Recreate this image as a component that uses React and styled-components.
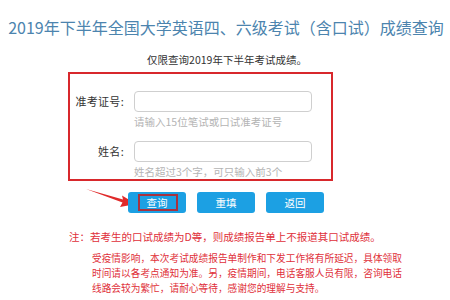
import React from 'react';
import styled, { createGlobalStyle } from 'styled-components';

const GlobalStyle = createGlobalStyle`
  html, body {
    margin: 0;
    padding: 0;
    background: #fff;
  }
  body {
    font-family: "Noto Sans CJK SC", "Noto Sans", sans-serif;
  }
`;

const Page = styled.div`
  width: 450px;
  height: 300px;
  overflow: hidden;
  padding-top: 17px;
  box-sizing: border-box;
`;

const Title = styled.h1`
  margin: 0;
  text-align: center;
  font-size: 16px;
  line-height: 20px;
  font-weight: 400;
  color: #4c84ae;
  white-space: nowrap;
  padding-left: 2px;
`;

const Subtitle = styled.p`
  margin: 16px 0 0;
  text-align: center;
  font-size: 10.5px;
  line-height: 14px;
  color: #333;
  padding-left: 4px;
`;

const FormBox = styled.div`
  margin: 5px 0 0 68px;
  width: 265px;
  height: 109px;
  box-sizing: border-box;
  border: 2px solid #d8282c;
  padding-top: 17px;
`;

const Field = styled.div`
  display: grid;
  grid-template-columns: 64px 178px;
  margin-bottom: ${({ $last }) => ($last ? 0 : '9px')};
`;

const Label = styled.label`
  grid-row: 1;
  text-align: right;
  padding-right: 10px;
  font-size: 11px;
  line-height: 21px;
  color: #333;
  letter-spacing: 0.3px;
`;

const Input = styled.input`
  grid-row: 1;
  grid-column: 2;
  width: 178px;
  height: 21px;
  box-sizing: border-box;
  border: 1px solid #cfcfcf;
  border-radius: 4px;
  outline: none;
  padding: 0 6px;
`;

const Hint = styled.div`
  grid-row: 2;
  grid-column: 2;
  font-size: 10.5px;
  line-height: 20px;
  height: 20px;
  color: #b4b4b4;
  white-space: nowrap;
`;

const Buttons = styled.div`
  position: relative;
  display: flex;
  gap: 11px;
  margin: 11px 0 0 128px;
`;

const Button = styled.button`
  position: relative;
  width: 58px;
  height: 21px;
  border: none;
  border-radius: 3px;
  background: #1ca0e3;
  color: #fff;
  font-family: inherit;
  font-size: 10.5px;
  padding: 0;
  cursor: pointer;
`;

const Highlight = styled.span`
  position: absolute;
  left: 10px;
  top: 2px;
  width: 40px;
  height: 17px;
  box-sizing: border-box;
  border: 2px solid #a8323e;
`;

const Arrow = styled.svg`
  position: absolute;
  left: -42px;
  top: -3px;
`;

const Notes = styled.div`
  margin-top: 16px;
  color: #e0303a;
  font-size: 10.5px;
  line-height: 15px;
`;

const NoteLine = styled.p`
  margin: 0 0 0 69px;
  white-space: nowrap;
`;

const NoteParagraph = styled.p`
  margin: 7px 0 0 92px;
  width: 318px;
  font-size: 9.7px;
  line-height: 15px;
`;

export default function App() {
  return (
    <Page>
      <GlobalStyle />
      <Title>2019年下半年全国大学英语四、六级考试（含口试）成绩查询</Title>
      <Subtitle>仅限查询2019年下半年考试成绩。</Subtitle>
      <FormBox>
        <Field>
          <Label htmlFor="zkz">准考证号:</Label>
          <Input id="zkz" />
          <Hint>请输入15位笔试或口试准考证号</Hint>
        </Field>
        <Field $last>
          <Label htmlFor="xm">姓名:</Label>
          <Input id="xm" />
          <Hint>姓名超过3个字，可只输入前3个</Hint>
        </Field>
      </FormBox>
      <Buttons>
        <Arrow width="52" height="22" viewBox="0 0 52 22">
          <path d="M0 0 L37 10.5 L36 6.5 L50 15 L34 18 L36.5 13.5 Z" fill="#e02a2a" />
        </Arrow>
        <Button>
          查询
          <Highlight />
        </Button>
        <Button>重填</Button>
        <Button>返回</Button>
      </Buttons>
      <Notes>
        <NoteLine>注：若考生的口试成绩为D等，则成绩报告单上不报道其口试成绩。</NoteLine>
        <NoteParagraph>
          受疫情影响，本次考试成绩报告单制作和下发工作将有所延迟，具体领取时间请以各考点通知为准。另，疫情期间，电话客服人员有限，咨询电话线路会较为繁忙，请耐心等待，感谢您的理解与支持。
        </NoteParagraph>
      </Notes>
    </Page>
  );
}
